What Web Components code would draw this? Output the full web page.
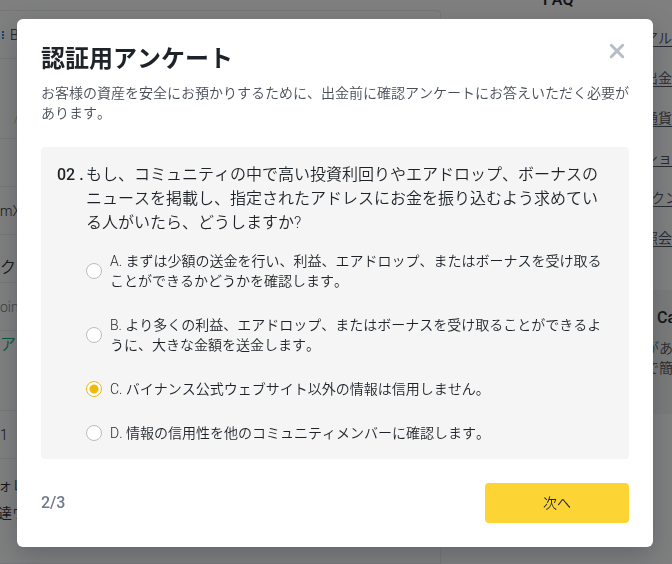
<!DOCTYPE html>
<html lang="ja">
<head>
<meta charset="utf-8">
<meta name="viewport" content="width=device-width, initial-scale=1">
<title>認証用アンケート</title>
<style>
    body {
        --text: #1e2329;
        --text-secondary: #474d57;
        --text-muted: #707a8a;
        --line: #eaecef;
        --icon: #b7bdc6;
        --surface: #f5f5f5;
        --primary: #fcd535;
        --accent: #f0b90b;
        margin: 0;
        color: var(--text);
        background: #fefefe;
        font: 350 14px/20px Roboto, "Noto Sans CJK JP", sans-serif;
        font-kerning: none;
    }
</style>
</head>
<body>
<account-page></account-page>
<modal-dialog heading="認証用アンケート">
    <span slot="description">お客様の資産を安全にお預かりするために、出金前に確認アンケートにお答えいただく必要があります。</span>
    <survey-question number="02" selected="C"></survey-question>
    <survey-footer slot="footer" step="2" total="3">次へ</survey-footer>
</modal-dialog>

<script>
/**
 * <account-page> — the withdrawal page that stays behind the dialog.
 */
class AccountPage extends HTMLElement {
    constructor() {
        super();
        this.attachShadow({ mode: 'open' });
    }

    connectedCallback() {
        this.shadowRoot.innerHTML = `
            <style>
                :host {
                    display: grid;
                    grid-template-columns: minmax(0, 441fr) minmax(0, 129fr);
                    column-gap: 102px;
                    height: 100vh;
                    overflow: hidden;
                }
                main {
                    margin-top: 10px;
                    border: 1px solid var(--line);
                    border-left: 0;
                    border-radius: 0 4px 0 0;
                }
                .row {
                    display: flex;
                    align-items: center;
                    box-sizing: border-box;
                    height: 48px;
                    border-bottom: 1px solid var(--line);
                }
                .start { align-items: flex-start; padding-top: 4px; }
                .end { align-items: flex-end; padding-bottom: 4px; }
                .tall { height: 80px; }
                .asset { gap: 6px; }
                .asset i {
                    width: 2px;
                    height: 8px;
                    border: dotted #2f80ed;
                    border-width: 0 2px 0 0;
                }
                .mark { padding: 0 0 6px 14px; color: #f0a060; }
                .large { font-size: 16px; }
                .muted { color: var(--text-muted); }
                .done { color: #03a66d; }
                .notes { margin-left: -2px; padding-top: 12px; line-height: 28px; }
                .notes p { margin: 0; }
                aside { min-width: 0; white-space: nowrap; }
                h2 { margin: -12px 0 0; font-size: 16px; font-weight: 500; line-height: 24px; }
                ul { margin: 0; padding: 16px 0 0 101px; list-style: none; }
                li { margin-bottom: 20px; }
                a { color: var(--text-secondary); text-underline-offset: 3px; }
                .indent { padding-left: 7px; }
                .card {
                    margin-top: 42px;
                    padding: 16px 0 36px 102px;
                    background: var(--surface);
                    color: var(--text-secondary);
                }
                h3 { margin: 0 0 8px; padding-left: 12px; color: var(--text); font-size: 16px; font-weight: 500; line-height: 24px; }
                .card p { margin: 0; }
            </style>
            <main>
                <div class="row asset"><i></i><span>B</span></div>
                <div class="row tall end"><span class="mark">/</span></div>
                <div class="row"></div>
                <div class="row">mX</div>
                <div class="row end large">ク</div>
                <div class="row muted">oin</div>
                <div class="row tall start done large">ア</div>
                <div class="row">1</div>
                <div class="notes"><p>ォレ</p><p>達ウ</p></div>
            </main>
            <aside>
                <h2>FAQ</h2>
                <ul>
                    <li><a href="#">アル</a></li>
                    <li><a href="#">出金</a></li>
                    <li><a href="#">通貨</a></li>
                    <li><a href="#">ション</a></li>
                    <li class="indent"><a href="#">クン</a></li>
                    <li><a href="#">照会</a></li>
                </ul>
                <div class="card">
                    <h3>Ca</h3>
                    <p>があ</p>
                    <p>で簡</p>
                </div>
            </aside>
        `;
    }
}

/**
 * <modal-dialog> — dimmed backdrop and a panel with heading, body and footer.
 */
class ModalDialog extends HTMLElement {
    constructor() {
        super();
        this.attachShadow({ mode: 'open' });
    }

    connectedCallback() {
        this.shadowRoot.innerHTML = `
            <style>
                :host {
                    position: fixed;
                    inset: 0;
                    display: flex;
                    align-items: center;
                    justify-content: center;
                    box-sizing: border-box;
                    padding: 18px 19px 16px 17px;
                    background: rgba(0, 0, 0, 0.5);
                }
                section {
                    flex: 1;
                    max-width: 720px;
                    box-sizing: border-box;
                    padding: 24px;
                    border-radius: 6px;
                    background: #fff;
                    box-shadow: 0 8px 24px rgba(71, 77, 87, 0.5);
                }
                header {
                    display: flex;
                    align-items: flex-start;
                    justify-content: space-between;
                }
                h1 { margin: 0; font-size: 24px; font-weight: 700; line-height: 32px; }
                button {
                    display: flex;
                    padding: 0;
                    border: 0;
                    background: none;
                    cursor: pointer;
                }
                svg { width: 24px; height: 16px; }
                path { fill: none; stroke: var(--icon); stroke-width: 3; stroke-linecap: round; }
                p { margin: 8px 0 24px; color: var(--text-secondary); }
            </style>
            <section role="dialog" aria-modal="true" aria-labelledby="title">
                <header>
                    <h1 id="title"></h1>
                    <button type="button" aria-label="閉じる">
                        <svg viewBox="0 0 24 16"><path d="M6.3 2.3l11.4 11.4M17.7 2.3L6.3 13.7"/></svg>
                    </button>
                </header>
                <p><slot name="description"></slot></p>
                <slot></slot>
                <slot name="footer"></slot>
            </section>
        `;
        this.shadowRoot.querySelector('h1').textContent = this.getAttribute('heading') || '';
        this.shadowRoot.querySelector('button').addEventListener('click', () => this.remove());
    }
}

/**
 * <survey-question> — one numbered question with its radio answers.
 */
class SurveyQuestion extends HTMLElement {
    constructor() {
        super();
        this.attachShadow({ mode: 'open' });
        this.question = 'もし、コミュニティの中で高い投資利回りやエアドロップ、ボーナスのニュースを掲載し、指定されたアドレスにお金を振り込むよう求めている人がいたら、どうしますか?';
        this.answers = {
            A: 'まずは少額の送金を行い、利益、エアドロップ、またはボーナスを受け取ることができるかどうかを確認します。',
            B: 'より多くの利益、エアドロップ、またはボーナスを受け取ることができるように、大きな金額を送金します。',
            C: 'バイナンス公式ウェブサイト以外の情報は信用しません。',
            D: '情報の信用性を他のコミュニティメンバーに確認します。'
        };
    }

    connectedCallback() {
        const selected = this.getAttribute('selected');
        const options = Object.entries(this.answers).map(([key, text]) => `
            <label>
                <input type="radio" name="answer" value="${key}" ${key === selected ? 'checked' : ''}>
                <span>${key}. ${text}</span>
            </label>
        `).join('');

        this.shadowRoot.innerHTML = `
            <style>
                :host {
                    display: grid;
                    grid-template-columns: 29px minmax(0, 1fr);
                    row-gap: 16px;
                    padding: 16px;
                    border-radius: 4px;
                    background: var(--surface);
                }
                .number, .question { font-size: 16px; line-height: 24px; }
                .number { font-weight: 500; white-space: nowrap; }
                .question { padding-right: 8px; }
                .options {
                    grid-column: 2;
                    display: flex;
                    flex-direction: column;
                    gap: 24px;
                }
                label { display: flex; align-items: center; gap: 8px; cursor: pointer; }
                input {
                    appearance: none;
                    flex: none;
                    box-sizing: border-box;
                    width: 16px;
                    height: 16px;
                    margin: 0;
                    border: 1px solid var(--icon);
                    border-radius: 50%;
                    background: #fff;
                }
                input:checked {
                    border-color: var(--accent);
                    background: radial-gradient(circle, var(--accent) 4px, #fff 5px);
                }
            </style>
            <span class="number">${this.getAttribute('number')} .</span>
            <span class="question" id="question">${this.question}</span>
            <div class="options" role="radiogroup" aria-labelledby="question">${options}</div>
        `;
    }
}

/**
 * <survey-footer> — progress count and the button to the next question.
 */
class SurveyFooter extends HTMLElement {
    constructor() {
        super();
        this.attachShadow({ mode: 'open' });
    }

    connectedCallback() {
        this.shadowRoot.innerHTML = `
            <style>
                :host {
                    display: flex;
                    align-items: center;
                    justify-content: space-between;
                    margin-top: 24px;
                }
                .count { color: var(--text-muted); font-size: 16px; font-weight: 500; }
                button {
                    min-width: 144px;
                    height: 40px;
                    border: 0;
                    border-radius: 4px;
                    background: var(--primary);
                    color: var(--text);
                    font: inherit;
                    cursor: pointer;
                }
            </style>
            <span class="count">${this.getAttribute('step')}/${this.getAttribute('total')}</span>
            <button type="button"><slot></slot></button>
        `;
    }
}

customElements.define('account-page', AccountPage);
customElements.define('modal-dialog', ModalDialog);
customElements.define('survey-question', SurveyQuestion);
customElements.define('survey-footer', SurveyFooter);
</script>
</body>
</html>
